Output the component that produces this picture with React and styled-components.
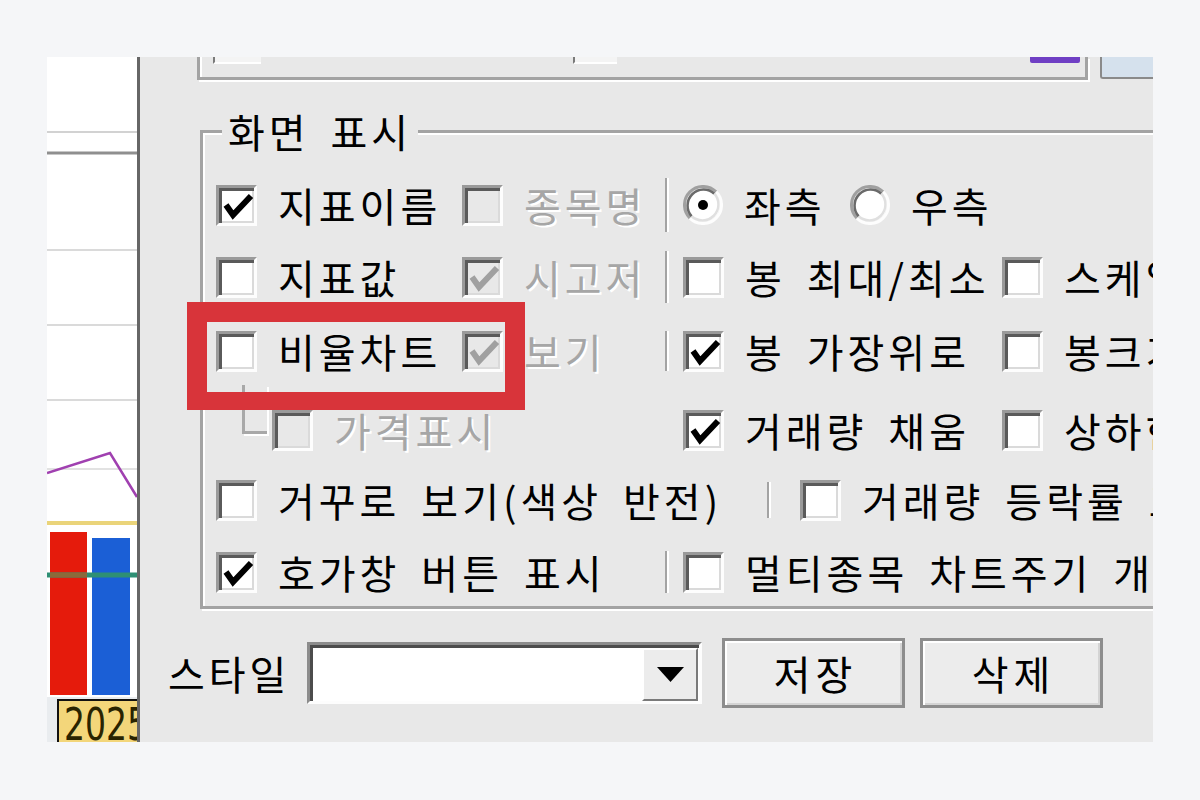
import React from 'react';
import styled, { createGlobalStyle } from 'styled-components';

const GlobalStyle = createGlobalStyle`
  html, body {
    margin: 0;
    padding: 0;
    background: #f5f6f8;
  }
  body {
    font-family: "Noto Sans CJK KR", "Noto Sans", sans-serif;
  }
`;

const Frame = styled.div`
  position: relative;
  display: flex;
  width: 1106px;
  height: 685px;
  margin: 57px 0 0 47px;
  overflow: hidden;
  background: #e8e8e8;
`;

const ChartStrip = styled.div`
  flex: none;
  width: 90px;
  height: 100%;
  background: #fff;
`;

const Divider = styled.div`
  flex: none;
  width: 3px;
  background: #666;
`;

const Pane = styled.div`
  flex: 1;
  min-width: 0;
  display: flex;
  flex-direction: column;
  align-items: flex-start;
  font-family: "Noto Sans CJK KR", sans-serif;
  font-size: 40px;
  letter-spacing: 4px;
  color: #000;
`;

const TopRow = styled.div`
  flex: none;
  display: flex;
  align-items: flex-start;
  height: 26px;
`;

const TopBox = styled.div`
  display: flex;
  align-items: flex-start;
  margin-left: 57px;
  width: 891px;
  height: 23px;
  box-sizing: border-box;
  border: 3px solid #a3a3a3;
  border-top: none;
  box-shadow: inset 2px 0 0 #fff, 2px 2px 0 #fff;
`;

const Stub = styled.span`
  flex: none;
  width: ${p => p.$w}px;
  margin-left: ${p => p.$ml}px;
  height: 5px;
  background: #f4f4f4;
  border-left: 2px solid #7a7a7a;
  border-bottom: 2px solid #fff;
`;

const PurpleBar = styled.span`
  margin-left: auto;
  margin-right: 5px;
  width: 50px;
  height: 6px;
  background: #6f3fc4;
  border-radius: 0 0 2px 2px;
`;

const BlueBtn = styled.span`
  margin-left: 12px;
  width: 60px;
  height: 20px;
  background: #d5e1ed;
  border-left: 2px solid #8a8a8a;
  border-bottom: 2px solid #8a8a8a;
  border-bottom-left-radius: 3px;
`;

const Group = styled.fieldset`
  flex: none;
  width: 1000px;
  box-sizing: border-box;
  margin: 28px 0 0 60px;
  padding: 32px 0 12px 13px;
  min-inline-size: 0;
  border: 3px solid #a3a3a3;
  box-shadow: inset 2px 2px 0 #fff, 2px 2px 0 #fff;
`;

const Legend = styled.legend`
  margin-left: 6px;
  padding: 0 6px;
  font-size: 40px;
  line-height: 40px;
  word-spacing: 8px;
  background: #e8e8e8;
`;

const Row = styled.div`
  display: flex;
  align-items: center;
  height: 44px;
  margin-top: ${p => p.$mt || 0}px;
  white-space: nowrap;
`;

const Cell = styled.div`
  flex: none;
  display: flex;
  align-items: center;
  gap: ${p => (p.$gap === undefined ? 21 : p.$gap)}px;
  width: ${p => (p.$w ? `${p.$w}px` : 'auto')};
  padding-left: ${p => p.$pl || 0}px;
  box-sizing: border-box;
`;

const Label = styled.span`
  line-height: 1;
  color: ${p => (p.$dim ? '#a6a6a6' : '#000')};
  text-shadow: ${p => (p.$dim ? '2px 2px 0 #fff' : 'none')};
  margin-left: ${p => p.$ml || 0}px;
  word-spacing: 8px;
`;

const Sep = styled.span`
  flex: none;
  width: 2px;
  height: ${p => p.$h}px;
  margin-right: ${p => p.$mr}px;
  background: #a3a3a3;
  box-shadow: 2px 0 0 #fff;
`;

const Tree = styled.span`
  flex: none;
  align-self: flex-start;
  width: 25px;
  height: 49px;
  margin-top: -25px;
  box-sizing: border-box;
  border-left: 3px solid #a8a8a8;
  border-bottom: 3px solid #a8a8a8;
  box-shadow: 2px 2px 0 #fff;
`;

const Box = styled.span`
  flex: none;
  width: 41px;
  height: 41px;
  box-sizing: border-box;
  margin-left: ${p => p.$ml || 0}px;
  border: 3px solid;
  border-color: #9a9a9a #fdfdfd #fdfdfd #9a9a9a;
  box-shadow: inset 3px 3px 0 #5a5a5a, inset -2px -2px 0 #dadada;
  background: ${p => (p.$disabled ? '#e8e8e8' : '#fff')};
  display: flex;
`;

const Check = ({ checked, disabled, ml }) => (
  <Box $disabled={disabled} $ml={ml}>
    {checked && (
      <svg width="35" height="35" viewBox="3 3 35 35">
        <polyline
          points="10,20 17,30 35,11"
          fill="none"
          stroke={disabled ? '#a0a0a0' : '#000'}
          strokeWidth="6"
        />
      </svg>
    )}
  </Box>
);

const Radio = ({ checked }) => (
  <svg width="40" height="40" viewBox="0 0 40 40" style={{ flex: 'none' }}>
    <circle cx="20" cy="20" r="17" fill="#fff" />
    <path d="M6.9 33.1 A18.5 18.5 0 0 1 33.1 6.9" fill="none" stroke="#a0a0a0" strokeWidth="3" />
    <path d="M33.1 6.9 A18.5 18.5 0 0 1 6.9 33.1" fill="none" stroke="#fdfdfd" strokeWidth="3" />
    <path d="M8.7 31.3 A16 16 0 0 1 31.3 8.7" fill="none" stroke="#6a6a6a" strokeWidth="2.5" />
    <path d="M31.3 8.7 A16 16 0 0 1 8.7 31.3" fill="none" stroke="#e0e0e0" strokeWidth="2.5" />
    {checked && <circle cx="20" cy="20" r="5" fill="#000" />}
  </svg>
);

const BottomBar = styled.div`
  flex: none;
  display: flex;
  align-items: center;
  height: 70px;
  margin-top: 29px;
  padding-left: 28px;
`;

const StyleLabel = styled.span`
  flex: none;
  width: 139px;
  line-height: 1;
`;

const Combo = styled.div`
  flex: none;
  width: 395px;
  height: 62px;
  box-sizing: border-box;
  display: flex;
  justify-content: flex-end;
  padding: 3px 1px 0 0;
  border: 3px solid;
  border-color: #8c8c8c #fdfdfd #fdfdfd #8c8c8c;
  box-shadow: inset 3px 3px 0 #4c4c4c;
  background: #fff;
`;

const DropBtn = styled.span`
  width: 56px;
  height: 53px;
  box-sizing: border-box;
  display: flex;
  align-items: center;
  justify-content: center;
  background: #ececec;
  border: 2px solid;
  border-color: #fff #7a7a7a #7a7a7a #fff;
`;

const Button = styled.button`
  flex: none;
  width: 183px;
  height: 70px;
  margin-left: ${p => p.$ml}px;
  box-sizing: border-box;
  display: flex;
  align-items: center;
  justify-content: center;
  padding: 0 0 0 4px;
  border: 3px solid #8d8d8d;
  background: #ececec;
  box-shadow: inset 2px 2px 0 #fff, inset -2px -2px 0 #d4d4d4;
  font-family: "Noto Sans CJK KR", sans-serif;
  font-size: 40px;
  letter-spacing: 5px;
  line-height: 1;
  color: #000;
`;

const Highlight = styled.div`
  position: absolute;
  left: 140px;
  top: 245px;
  width: 338px;
  height: 108px;
  box-sizing: border-box;
  border: 20px solid #d8343a;
  border-bottom-width: 18px;
  pointer-events: none;
`;

const Chart = () => (
  <svg width="90" height="685" viewBox="0 0 90 685">
    <rect x="0" y="0" width="90" height="640" fill="#fff" />
    <line x1="0" y1="75" x2="90" y2="75" stroke="#d2d2d2" strokeWidth="2" />
    <line x1="0" y1="96" x2="90" y2="96" stroke="#8f8f8f" strokeWidth="3" />
    <line x1="0" y1="193" x2="90" y2="193" stroke="#dadada" strokeWidth="2" />
    <line x1="0" y1="268" x2="90" y2="268" stroke="#dadada" strokeWidth="2" />
    <line x1="0" y1="343" x2="90" y2="343" stroke="#dadada" strokeWidth="2" />
    <line x1="0" y1="412" x2="90" y2="412" stroke="#e2e2e2" strokeWidth="2" />
    <polyline points="0,416 63,396 90,440" fill="none" stroke="#a040b0" strokeWidth="2.5" />
    <line x1="0" y1="466" x2="90" y2="466" stroke="#ead47a" strokeWidth="4" />
    <rect x="3" y="475" width="37" height="163" fill="#e51b0c" />
    <rect x="45" y="481" width="38" height="157" fill="#1b5fd6" />
    <line x1="0" y1="518" x2="90" y2="518" stroke="#2e8f74" strokeWidth="5" />
    <rect x="3" y="515.5" width="37" height="5" fill="#8b6a3a" />
    <rect x="0" y="640" width="90" height="45" fill="#e9ecef" />
    <rect x="11" y="643" width="82" height="44" fill="#f3d67a" stroke="#111" strokeWidth="2" />
    <text
      x="17"
      y="683"
      fontFamily="DejaVu Sans Condensed, DejaVu Sans, sans-serif"
      fontSize="44"
      fill="#2a2400"
      textLength="84"
      lengthAdjust="spacingAndGlyphs"
    >
      2025
    </text>
  </svg>
);

export default function App() {
  return (
    <>
      <GlobalStyle />
      <Frame>
        <ChartStrip>
          <Chart />
        </ChartStrip>
        <Divider />
        <Pane>
          <TopRow>
            <TopBox>
              <Stub $w={46} $ml={13} />
              <Stub $w={42} $ml={312} />
              <PurpleBar />
            </TopBox>
            <BlueBtn />
          </TopRow>

          <Group>
            <Legend>화면 표시</Legend>

            <Row>
              <Cell $w={246}>
                <Check checked />
                <Label>지표이름</Label>
              </Cell>
              <Cell $w={203}>
                <Check disabled />
                <Label $dim>종목명</Label>
              </Cell>
              <Sep $h={54} $mr={16} />
              <Cell $w={167}>
                <Radio checked />
                <Label>좌측</Label>
              </Cell>
              <Cell>
                <Radio />
                <Label>우측</Label>
              </Cell>
            </Row>

            <Row $mt={28}>
              <Cell $w={246}>
                <Check />
                <Label>지표값</Label>
              </Cell>
              <Cell $w={203}>
                <Check checked disabled />
                <Label $dim>시고저</Label>
              </Cell>
              <Sep $h={52} $mr={16} />
              <Cell $w={319}>
                <Check />
                <Label>봉 최대/최소</Label>
              </Cell>
              <Cell>
                <Check />
                <Label>스케일 고정</Label>
              </Cell>
            </Row>

            <Row $mt={30}>
              <Cell $w={246}>
                <Check />
                <Label>비율차트</Label>
              </Cell>
              <Cell $w={203}>
                <Check checked disabled />
                <Label $dim>보기</Label>
              </Cell>
              <Sep $h={40} $mr={16} />
              <Cell $w={319}>
                <Check checked />
                <Label>봉 가장위로</Label>
              </Cell>
              <Cell>
                <Check />
                <Label>봉크기 고정</Label>
              </Cell>
            </Row>

            <Row $mt={35}>
              <Cell $w={467} $pl={26} $gap={0}>
                <Tree />
                <Check disabled ml={5} />
                <Label $dim $ml={21}>가격표시</Label>
              </Cell>
              <Cell $w={319}>
                <Check checked />
                <Label>거래량 채움</Label>
              </Cell>
              <Cell>
                <Check />
                <Label>상하한가 표시</Label>
              </Cell>
            </Row>

            <Row $mt={26}>
              <Cell $w={551}>
                <Check />
                <Label>거꾸로 보기(색상 반전)</Label>
              </Cell>
              <Sep $h={36} $mr={31} />
              <Cell>
                <Check />
                <Label>거래량 등락률 표시</Label>
              </Cell>
            </Row>

            <Row $mt={28}>
              <Cell $w={449}>
                <Check checked />
                <Label>호가창 버튼 표시</Label>
              </Cell>
              <Sep $h={42} $mr={16} />
              <Cell>
                <Check />
                <Label>멀티종목 차트주기 개별 적용</Label>
              </Cell>
            </Row>
          </Group>

          <BottomBar>
            <StyleLabel>스타일</StyleLabel>
            <Combo>
              <DropBtn>
                <svg width="27" height="15" viewBox="0 0 27 15">
                  <polygon points="0,0 27,0 13.5,15" fill="#000" />
                </svg>
              </DropBtn>
            </Combo>
            <Button $ml={20}>저장</Button>
            <Button $ml={15}>삭제</Button>
          </BottomBar>
        </Pane>
        <Highlight />
      </Frame>
    </>
  );
}
